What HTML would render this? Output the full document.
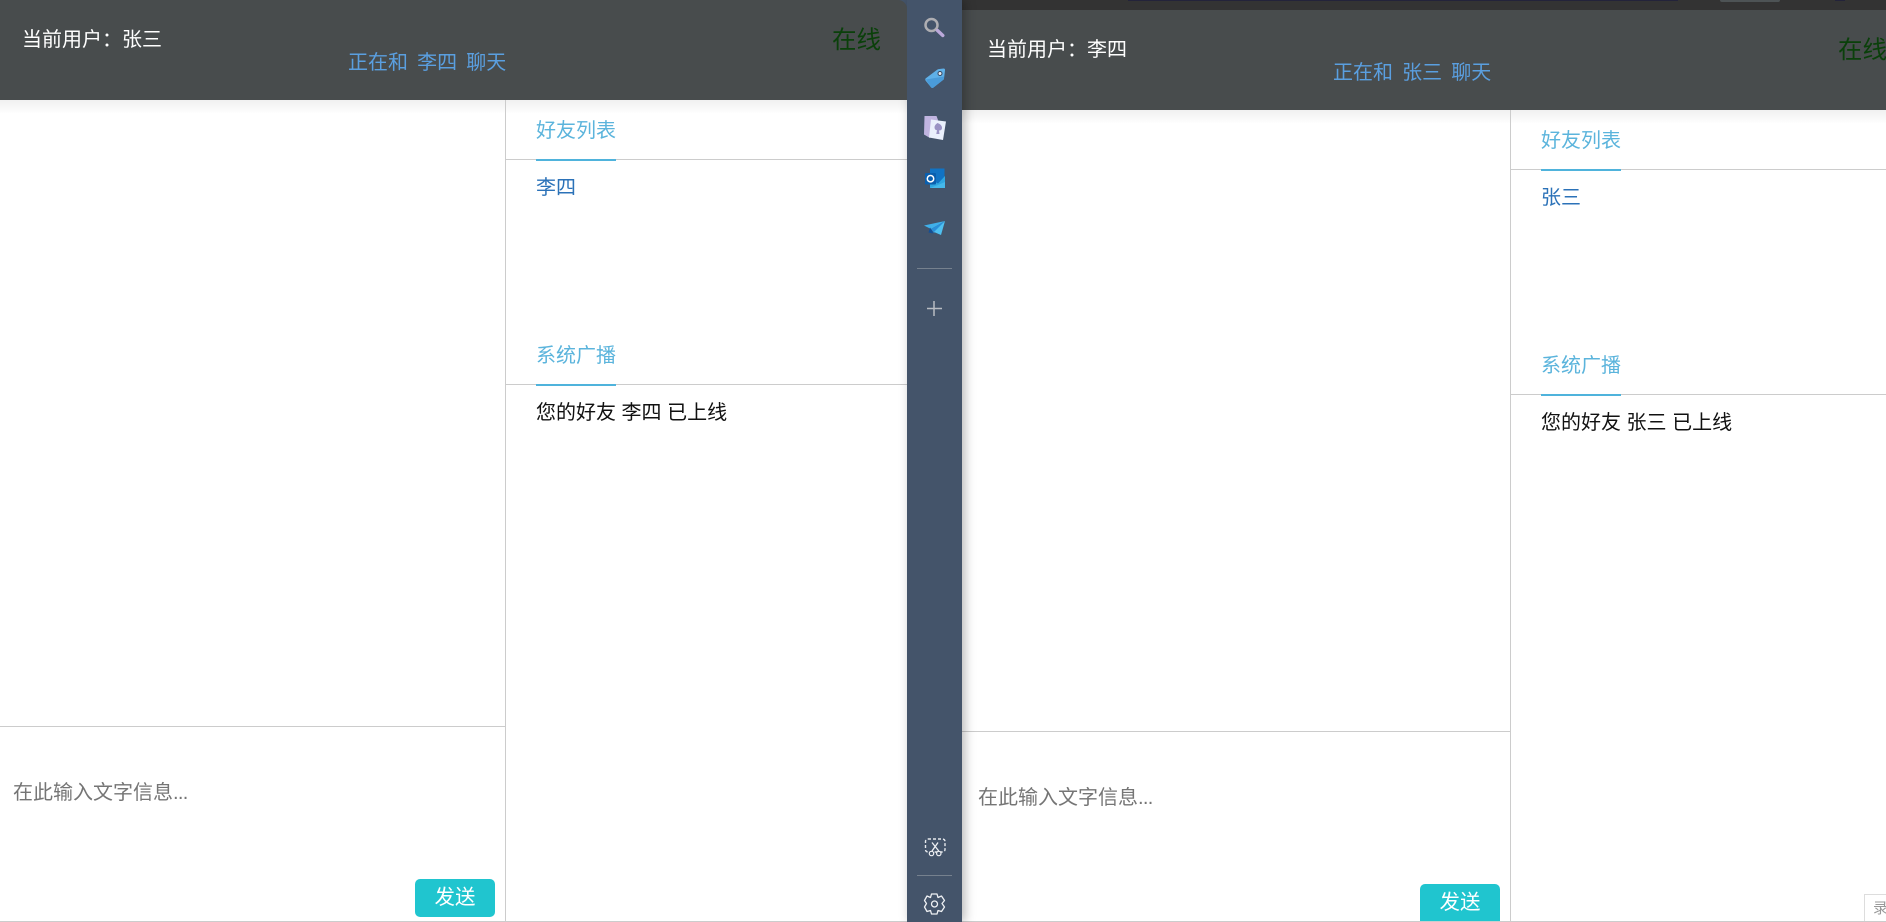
<!DOCTYPE html>
<html lang="zh"><head><meta charset="utf-8"><title>Chat</title>
<style>
html,body{margin:0;padding:0;width:1886px;height:922px;overflow:hidden;background:#fff}
body{font-family:"Liberation Sans","Noto Sans CJK SC",sans-serif;font-size:20px;position:relative}
.a{position:absolute;white-space:nowrap}
.t{line-height:28px;font-weight:400}
.h{background:#484c4d}
.l{background:#ccc}
.blue{color:#5bb4dc}
.u{background:#4fb3dc;height:2px;width:80px}
.g{word-spacing:-1px}
.d{letter-spacing:-.7px}
.btn{background:#20c5cf;border-radius:5px;color:#fff;text-align:center;width:80px;height:38px;line-height:38px;font-size:20.500px}
</style></head><body>
<!-- left pane -->
<div class="a" style="left:0;top:100px;width:907px;height:14px;background:linear-gradient(#f0f0f0,#fff);z-index:0"></div>
<div class="a" style="left:890px;top:0;width:20px;height:20px;background:#44546a;z-index:1"></div>
<div class="a h" style="left:0;top:0;width:907px;height:100px;border-radius:0 9px 0 0;z-index:2"></div>
<div class="a t" style="left:22px;top:26px;color:#fff;z-index:3">当前用户：张三</div>
<div class="a t g" style="left:348px;top:49px;color:#5a9fe0;z-index:3">正在和&nbsp;&nbsp;李四&nbsp;&nbsp;聊天</div>
<div class="a t" style="left:832px;top:27px;font-size:24.500px;color:#0a400a;z-index:3">在线</div>
<div class="a l" style="left:505px;top:100px;width:1px;height:822px"></div>
<div class="a t blue" style="left:536px;top:117px">好友列表</div>
<div class="a l" style="left:505px;top:159px;width:402px;height:1px"></div>
<div class="a u" style="left:536px;top:159px"></div>
<div class="a t" style="left:536px;top:174px;color:#2b72b8">李四</div>
<div class="a t blue" style="left:536px;top:342px">系统广播</div>
<div class="a l" style="left:505px;top:384px;width:402px;height:1px"></div>
<div class="a u" style="left:536px;top:384px"></div>
<div class="a t" style="left:536px;top:399px;color:#111">您的好友 李四 已上线</div>
<div class="a l" style="left:0;top:726px;width:505px;height:1px"></div>
<div class="a t" style="left:13px;top:779px;color:#757575">在此输入文字信息<span class="d">...</span></div>
<div class="a btn" style="left:415px;top:879px">发送</div>

<!-- right pane -->
<div class="a" style="left:962px;top:0;width:924px;height:10px;background:#333"></div>
<div class="a" style="left:1128px;top:0;width:550px;height:1px;background:#23233a"></div>
<div class="a" style="left:1720px;top:0;width:60px;height:2px;background:#4d5355;border-radius:0 0 8px 8px"></div>
<div class="a" style="left:1835px;top:0;width:10px;height:1px;background:#23233a"></div>
<div class="a" style="left:962px;top:110px;width:924px;height:14px;background:linear-gradient(#f0f0f0,#fff)"></div>
<div class="a h" style="left:962px;top:10px;width:924px;height:100px"></div>
<div class="a t" style="left:987px;top:36px;color:#fff">当前用户：李四</div>
<div class="a t g" style="left:1333px;top:59px;color:#5a9fe0">正在和&nbsp;&nbsp;张三&nbsp;&nbsp;聊天</div>
<div class="a t" style="left:1838px;top:37px;font-size:24.500px;color:#0a400a">在线</div>
<div class="a l" style="left:1510px;top:110px;width:1px;height:812px"></div>
<div class="a t blue" style="left:1541px;top:127px">好友列表</div>
<div class="a l" style="left:1510px;top:169px;width:376px;height:1px"></div>
<div class="a u" style="left:1541px;top:169px"></div>
<div class="a t" style="left:1541px;top:184px;color:#2b72b8">张三</div>
<div class="a t blue" style="left:1541px;top:352px">系统广播</div>
<div class="a l" style="left:1510px;top:394px;width:376px;height:1px"></div>
<div class="a u" style="left:1541px;top:394px"></div>
<div class="a t" style="left:1541px;top:409px;color:#111">您的好友 张三 已上线</div>
<div class="a l" style="left:962px;top:731px;width:548px;height:1px"></div>
<div class="a t" style="left:978px;top:784px;color:#757575">在此输入文字信息<span class="d">...</span></div>
<div class="a btn" style="left:1420px;top:884px;border-bottom:1px solid #1a86b8;height:37px;border-radius:5px 5px 0 0">发送</div>
<div class="a" style="left:1864px;top:894px;width:22px;height:28px;border:1px solid #ddd;border-right:0;box-sizing:border-box;font-size:15px;line-height:28px;color:#999;padding-left:8px;overflow:hidden;background:#fff">录</div>
<div class="a l" style="left:0;top:921px;width:1886px;height:1px;z-index:1"></div>

<!-- sidebar -->
<div class="a" style="left:907px;top:0;width:55px;height:922px;background:#44546a;z-index:1;box-shadow:3px 0 10px rgba(0,0,0,.28)"></div>
<svg class="a" style="left:907px;top:0;z-index:4" width="55" height="922" viewBox="907 0 55 922">
  <!-- search -->
  <circle cx="931.500" cy="25" r="6" fill="none" stroke="#aeaeb2" stroke-width="2.500"/>
  <path d="M937.500 30.500L942.800 35.500" stroke="#bba9da" stroke-width="3.400" stroke-linecap="round"/>
  <!-- tag -->
  <path d="M925.500 78.500L937.500 69.500Q938.500 69 939.500 69L943.500 68.500Q945.300 68.500 945 70.500L944 78.500Q944 79.500 943 80L933.500 87.500Q932 88.500 931 87.300L925.500 80.500Q925 79.500 925.500 78.500Z" fill="#5fb0e8"/>
  <path d="M925.800 79.500L944 76.500L944 78.500Q944 79.500 943 80L933.500 87.500Q932 88.500 931 87.300Z" fill="#4a9bd9"/>
  <circle cx="940" cy="73.500" r="2" fill="#e8edf4" stroke="#33445e" stroke-width="1"/>
  <!-- cards -->
  <path d="M924.500 116H936.500L938 120L930 138L924 134.500Z" fill="#c0b4e0"/>
  <path d="M931 119.500L946 121.500L943 140L929 137.500Z" fill="#eaf0fc"/>
  <path d="M937.500 123Q935 124.500 934.500 127Q934.500 130 937 130.300L936.300 134H939.500L939 130.500Q942 130.500 942 128Q942 124.500 937.500 123Z" fill="#9a93c4"/>
  <!-- outlook -->
  <path d="M930 168.500H944.500V188H930Z" fill="#1173c4"/>
  <path d="M930 179L938 183.500L945 176V188H930Z" fill="#2fa6e0"/>
  <path d="M930 188H945V182L938 185Z" fill="#45b8ea"/>
  <rect x="925" y="173" width="11" height="11.500" rx="1" fill="#0a5fae"/>
  <circle cx="930.500" cy="178.700" r="3.200" fill="none" stroke="#fff" stroke-width="1.500"/>
  <!-- plane -->
  <path d="M924 225.500L945 221L931 229Z" fill="#3fb0ea"/>
  <path d="M945 221L931 229L934 233Z" fill="#2a8fd8"/>
  <path d="M945 221L934 232L941 235Z" fill="#4fc0f0"/>
  <path d="M930 227.500L928.500 232.500L933.500 233.500L931 229Z" fill="#124f96"/>
  <!-- dividers -->
  <rect x="917" y="268" width="35" height="1" fill="#76818e"/>
  <path d="M934 301V316M927 308.500H942" stroke="#b8bcc2" stroke-width="1.500"/>
  <!-- screenshot -->
  <rect x="925.500" y="839" width="19.500" height="13" rx="2.500" fill="none" stroke="#e6e9ed" stroke-width="1.400" stroke-dasharray="3 2"/>
  <path d="M932 842.500L938.800 851M938 842.500L932 851" stroke="#eef0f3" stroke-width="1.300"/>
  <circle cx="931.500" cy="853.500" r="2.200" fill="#44546a" stroke="#eef0f3" stroke-width="1.200"/>
  <circle cx="938.800" cy="853.500" r="2.200" fill="#44546a" stroke="#eef0f3" stroke-width="1.200"/>
  <rect x="917" y="875" width="35" height="1" fill="#76818e"/>
  <!-- gear -->
  <path d="M931.500 894H937L938 897.500L941.500 896L944.500 900.500L942 903.500L944.500 907L941.500 911.500L938 910.500L937 914H931.500L930.500 910.500L927 911.500L924.500 907L926.500 903.500L924.500 900.500L927 896L930.500 897.500Z" fill="none" stroke="#eef0f3" stroke-width="1.300" stroke-linejoin="round"/>
  <circle cx="934.500" cy="904" r="3" fill="none" stroke="#eef0f3" stroke-width="1.300"/>
</svg>
</body></html>
